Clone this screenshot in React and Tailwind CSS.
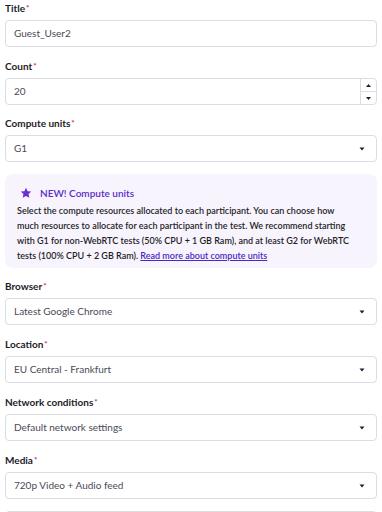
import React from 'react';

const Label = ({ children }) => (
  <label className="block text-[10px] font-bold leading-[14px] h-[14px] text-[#1c1c28] mb-[5px]">
    {children}
    <span className="inline-block text-[#e0245e] text-[8px] leading-none relative -top-[1px] ml-[1px]">*</span>
  </label>
);

const Caret = () => (
  <svg width="6" height="4" viewBox="0 0 6 4" className="shrink-0">
    <path d="M0.5 0.5 L5.5 0.5 L3 3.5 Z" fill="#1f1d3a" />
  </svg>
);

const SelectField = ({ label, value }) => (
  <div className="mb-[12px]">
    <Label>{label}</Label>
    <div className="h-[27px] border border-[#dcdce4] rounded-[4px] bg-white flex items-center justify-between pl-[8px] pr-[11px]">
      <span className="text-[10px] text-[#4a4a55]">{value}</span>
      <Caret />
    </div>
  </div>
);

export default function App() {
  return (
    <div className="w-[382px] h-[512px] overflow-hidden bg-white px-[5px] pt-[1px]" style={{ fontFamily: 'Lato, "Noto Sans", sans-serif' }}>
      <div className="mb-[12px]">
        <Label>Title</Label>
        <div className="h-[27px] border border-[#dcdce4] rounded-[4px] flex items-center pl-[8px]">
          <span className="text-[10px] text-[#4a4a55]">Guest_User2</span>
        </div>
      </div>

      <div className="mb-[11px]">
        <Label>Count</Label>
        <div className="h-[27px] border border-[#dcdce4] rounded-[4px] flex items-stretch">
          <div className="flex-1 flex items-center pl-[8px]">
            <span className="text-[10px] text-[#4a4a55]">20</span>
          </div>
          <div className="w-[16px] border-l border-[#dcdce4] flex flex-col">
            <div className="flex-1 flex items-center justify-center border-b border-[#dcdce4]">
              <svg width="5" height="3" viewBox="0 0 5 3">
                <path d="M0 3 L5 3 L2.5 0 Z" fill="#1f1d3a" />
              </svg>
            </div>
            <div className="flex-1 flex items-center justify-center">
              <svg width="5" height="3" viewBox="0 0 5 3">
                <path d="M0 0 L5 0 L2.5 3 Z" fill="#1f1d3a" />
              </svg>
            </div>
          </div>
        </div>
      </div>

      <SelectField label="Compute units" value="G1" />

      <div className="bg-[#f7f4fd] rounded-[8px] px-[12px] pt-[13px] pb-[5px] mb-[11px]">
        <div className="flex items-center gap-[8px] pl-[3px] mb-[4px]">
          <svg width="12" height="12" viewBox="0 0 24 24">
            <path d="M12 1.5l3.2 6.9 7.4.8-5.5 5 1.5 7.4L12 17.8l-6.6 3.8 1.5-7.4-5.5-5 7.4-.8z" fill="#6a2fd0" />
          </svg>
          <span className="text-[10px] leading-[12px] font-semibold text-[#5b2bc9]">NEW! Compute units</span>
        </div>
        <p className="text-[9px] leading-[15px] text-[#1e1e28] font-semibold">
          Select the compute resources allocated to each participant. You can choose how
          <br />
          much resources to allocate for each participant in the test. We recommend starting
          <br />
          with G1 for non-WebRTC tests (50% CPU + 1 GB Ram), and at least G2 for WebRTC
          <br />
          tests (100% CPU + 2 GB Ram).{' '}
          <a className="text-[#4b28c4] underline">Read more about compute units</a>
        </p>
      </div>

      <SelectField label="Browser" value="Latest Google Chrome" />
      <SelectField label="Location" value="EU Central - Frankfurt" />
      <SelectField label="Network conditions" value="Default network settings" />
      <SelectField label="Media" value="720p Video + Audio feed" />
      <div className="h-[27px] border border-[#dcdce4] rounded-[4px]" />
    </div>
  );
}
